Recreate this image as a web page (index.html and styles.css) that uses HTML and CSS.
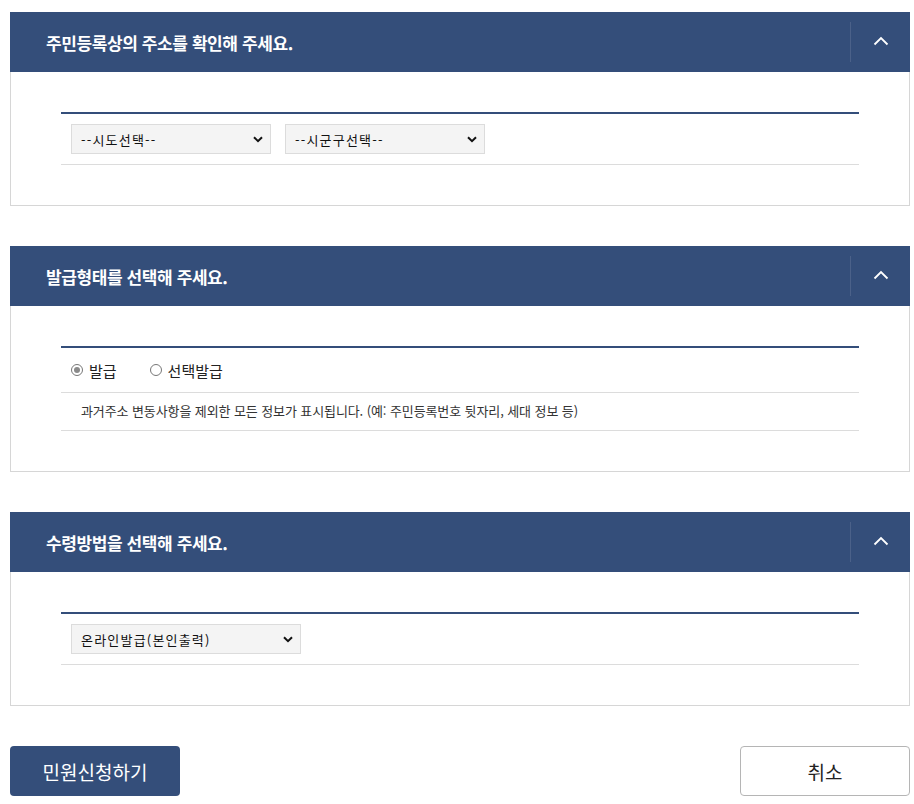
FILE: index.html
```html
<!DOCTYPE html>
<html lang="ko">
<head>
<meta charset="utf-8">
<title>민원신청</title>
<link rel="stylesheet" href="styles.css">
</head>
<body>
<div class="page">
  <section class="panel">
    <div class="panel-head">
      <h2 class="panel-title">주민등록상의 주소를 확인해 주세요.</h2>
      <button class="toggle" type="button" aria-label="접기">
        <svg width="16" height="10" viewBox="0 0 16 10"><path d="M1.5 8.5 L8 2 L14.5 8.5" fill="none" stroke="#fff" stroke-width="1.8"/></svg>
      </button>
    </div>
    <div class="panel-body">
      <div class="table">
        <div class="row">
          <span class="sel w200">
            <select><option>--시도선택--</option></select>
            <svg class="caret" width="10" height="7" viewBox="0 0 10 7"><path d="M1 1.2 L5 5.2 L9 1.2" fill="none" stroke="#111" stroke-width="2"/></svg>
          </span>
          <span class="sel w200">
            <select><option>--시군구선택--</option></select>
            <svg class="caret" width="10" height="7" viewBox="0 0 10 7"><path d="M1 1.2 L5 5.2 L9 1.2" fill="none" stroke="#111" stroke-width="2"/></svg>
          </span>
        </div>
      </div>
    </div>
  </section>

  <section class="panel">
    <div class="panel-head">
      <h2 class="panel-title">발급형태를 선택해 주세요.</h2>
      <button class="toggle" type="button" aria-label="접기">
        <svg width="16" height="10" viewBox="0 0 16 10"><path d="M1.5 8.5 L8 2 L14.5 8.5" fill="none" stroke="#fff" stroke-width="1.8"/></svg>
      </button>
    </div>
    <div class="panel-body">
      <div class="table">
        <div class="row radios">
          <label class="radio"><span class="dot checked"></span>발급</label>
          <label class="radio"><span class="dot"></span>선택발급</label>
        </div>
        <div class="row desc">과거주소 변동사항을 제외한 모든 정보가 표시됩니다. (예: 주민등록번호 뒷자리, 세대 정보 등)</div>
      </div>
    </div>
  </section>

  <section class="panel">
    <div class="panel-head">
      <h2 class="panel-title">수령방법을 선택해 주세요.</h2>
      <button class="toggle" type="button" aria-label="접기">
        <svg width="16" height="10" viewBox="0 0 16 10"><path d="M1.5 8.5 L8 2 L14.5 8.5" fill="none" stroke="#fff" stroke-width="1.8"/></svg>
      </button>
    </div>
    <div class="panel-body">
      <div class="table">
        <div class="row">
          <span class="sel w230">
            <select><option>온라인발급(본인출력)</option></select>
            <svg class="caret" width="10" height="7" viewBox="0 0 10 7"><path d="M1 1.2 L5 5.2 L9 1.2" fill="none" stroke="#111" stroke-width="2"/></svg>
          </span>
        </div>
      </div>
    </div>
  </section>

  <div class="actions">
    <button class="btn primary" type="button">민원신청하기</button>
    <button class="btn outline" type="button">취소</button>
  </div>
</div>
</body>
</html>
```

FILE: styles.css
```css
* { box-sizing: border-box; }
html, body { margin: 0; padding: 0; background: #fff; }
body {
  font-family: "Noto Sans CJK KR", "Noto Sans", "Liberation Sans", sans-serif;
  color: #222;
}
.page {
  width: 900px;
  margin: 12px 0 0 10px;
  display: flex;
  flex-direction: column;
  gap: 40px;
}
.panel {
  border: 1px solid #d6d6d6;
  border-top: 0;
}
.panel-head {
  height: 60px;
  background: #344e7a;
  margin: 0 -1px;
  display: flex;
  align-items: center;
  justify-content: space-between;
  padding-left: 36px;
}
.panel-title {
  margin: 0;
  color: #fff;
  font-size: 17px;
  font-weight: 700;
  letter-spacing: -0.4px;
  line-height: 1;
}
.toggle {
  width: 60px;
  height: 40px;
  border: 0;
  border-left: 1px solid #4b6189;
  background: transparent;
  display: flex;
  align-items: center;
  justify-content: center;
  padding: 0 0 2px 0;
  cursor: pointer;
}
.panel-body {
  padding: 40px 50px;
}
.table {
  border-top: 2px solid #344e7a;
}
.row {
  border-bottom: 1px solid #dcdcdc;
  padding: 10px;
  display: flex;
  gap: 14px;
}
.sel {
  position: relative;
  display: inline-block;
  height: 30px;
}
.w200 { width: 200px; }
.w230 { width: 230px; }
.sel select {
  appearance: none;
  -webkit-appearance: none;
  width: 100%;
  height: 30px;
  border: 1px solid #dcdcdc;
  background: #f4f4f4;
  font-family: "Noto Sans CJK KR", sans-serif;
  font-size: 13px;
  letter-spacing: 1.2px;
  color: #111;
  padding: 0 24px 0 9px;
  border-radius: 0;
  outline: none;
}
.caret {
  position: absolute;
  right: 8px;
  top: 12px;
  pointer-events: none;
}
.radios {
  padding: 12px 10px;
  gap: 33px;
  height: 45px;
  align-items: center;
}
.radio {
  display: inline-flex;
  align-items: center;
  gap: 6px;
  font-size: 15px;
  color: #222;
  letter-spacing: 0;
}
.dot {
  width: 12px;
  height: 12px;
  border: 1px solid #777;
  border-radius: 50%;
  display: inline-block;
  position: relative;
  background: #fff;
}
.dot.checked::after {
  content: "";
  position: absolute;
  left: 2px;
  top: 2px;
  width: 6px;
  height: 6px;
  border-radius: 50%;
  background: #8a8a8a;
}
.desc {
  display: block;
  font-size: 13px;
  color: #333;
  padding: 9px 20px 10px;
  letter-spacing: -0.1px;
  line-height: 18px;
}
.actions {
  display: flex;
  justify-content: space-between;
}
.btn {
  width: 170px;
  height: 50px;
  border-radius: 4px;
  font-family: "Noto Sans CJK KR", sans-serif;
  font-size: 19px;
  cursor: pointer;
}
.primary {
  background: #344e7a;
  color: #fff;
  border: 0;
}
.outline {
  background: #fff;
  color: #222;
  border: 1px solid #b5b5b5;
}
```
